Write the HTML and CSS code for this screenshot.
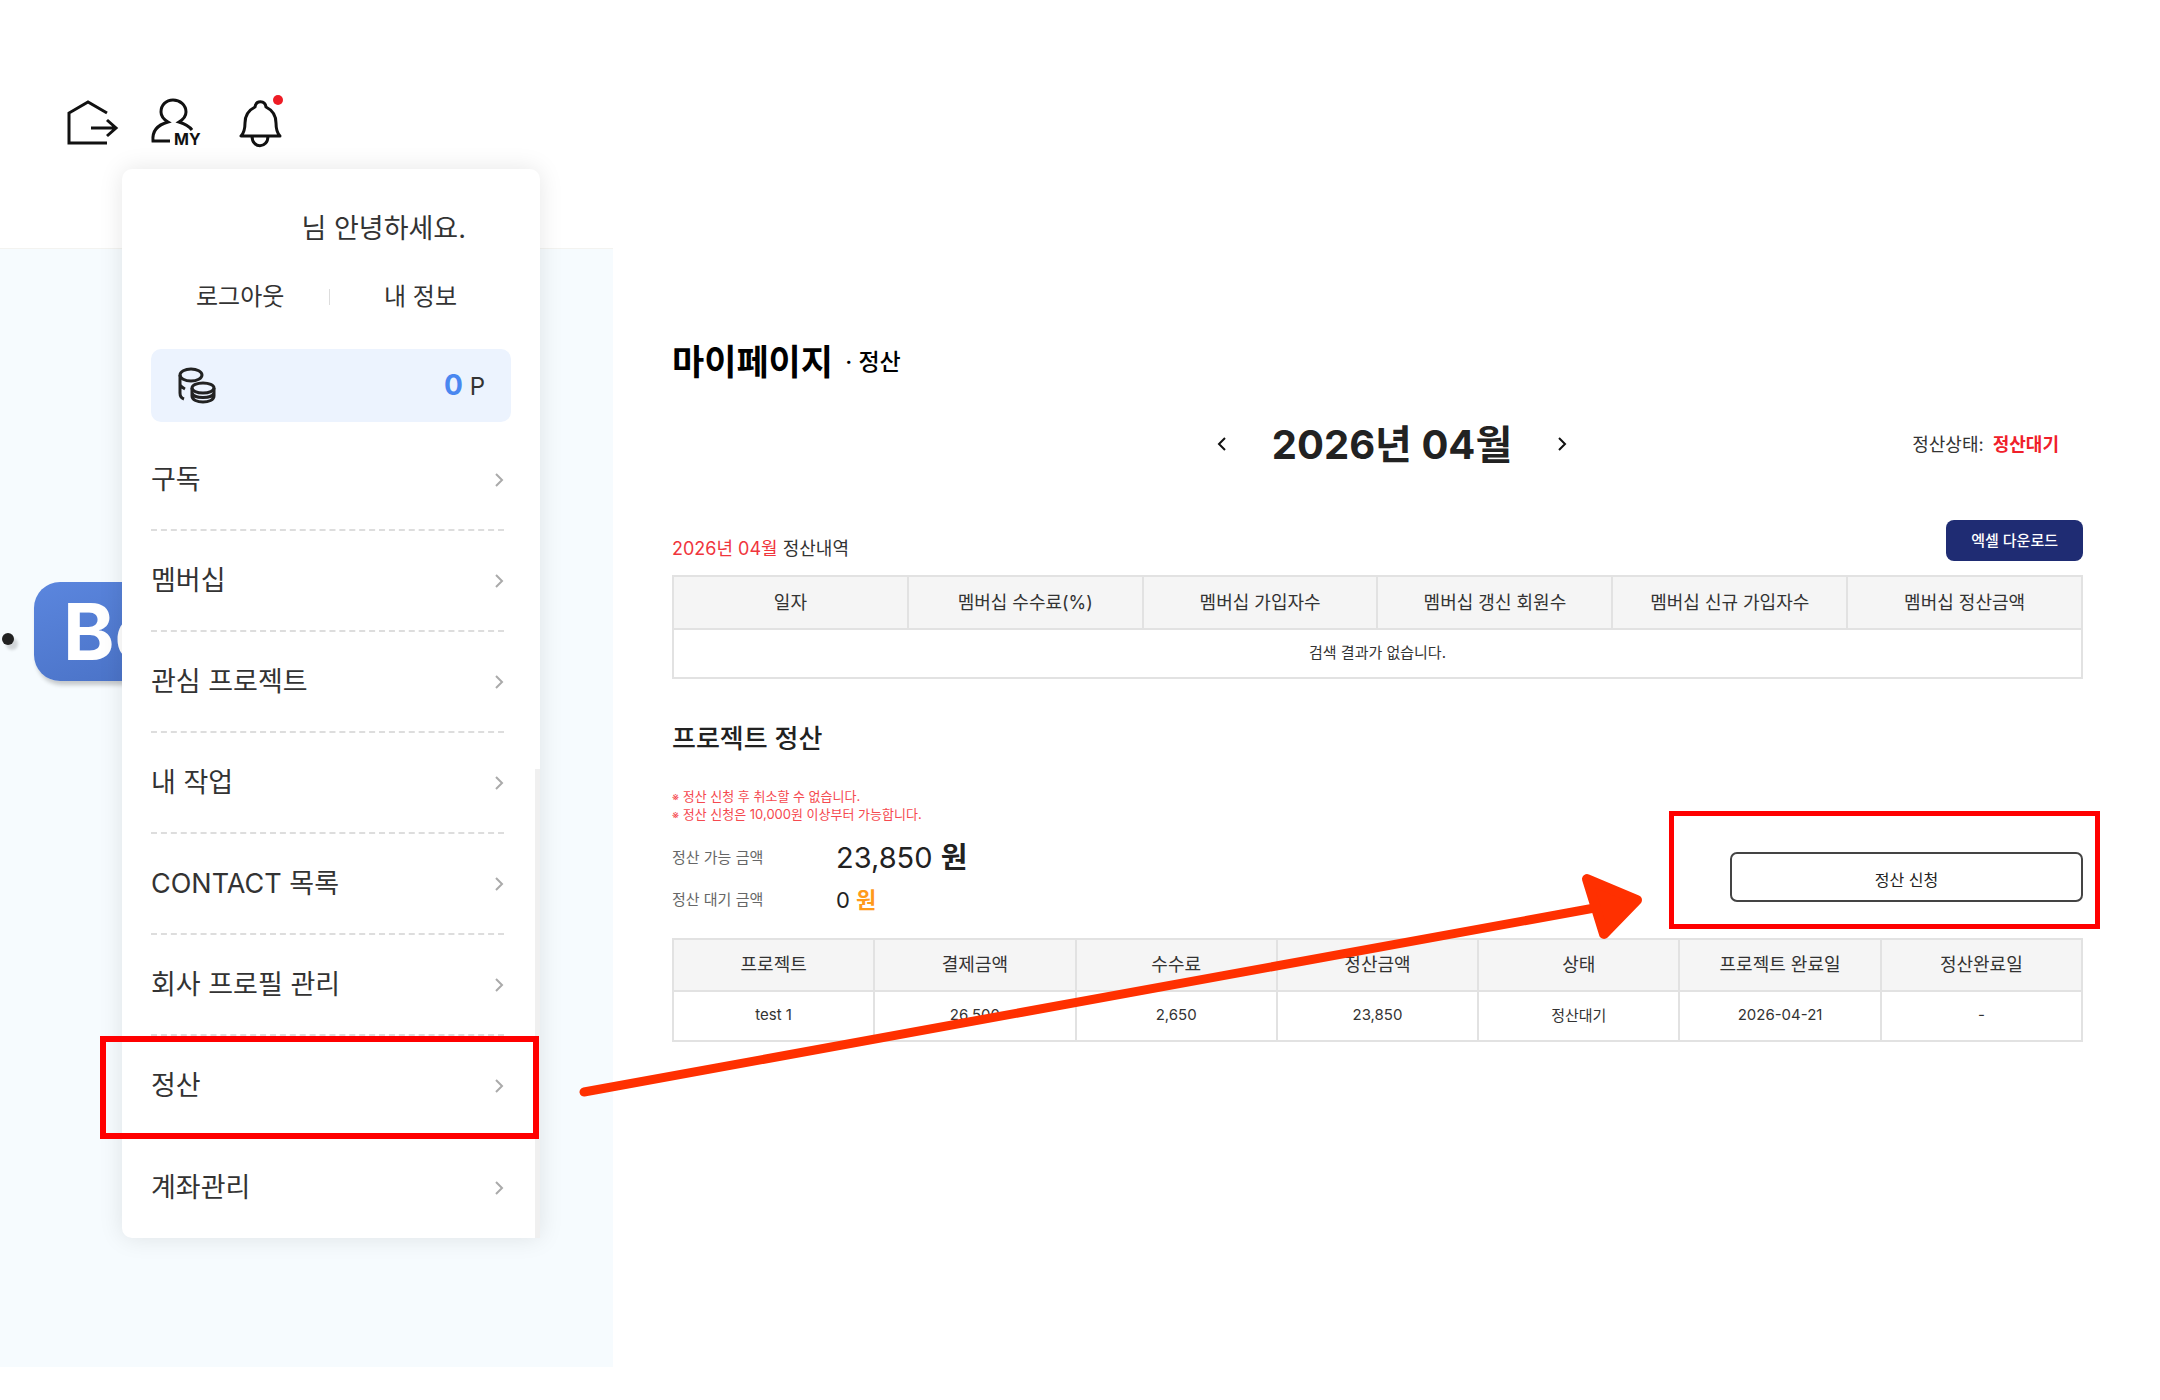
FILE: index.html
```html
<!DOCTYPE html>
<html lang="ko">
<head>
    <meta charset="UTF-8">
    <title>마이페이지 - 정산</title>
    <link rel="stylesheet" href="styles.css">
</head>
<body>
    <div class="page">
        <aside class="side">
            <header class="top-icons">
                <a href="#" aria-label="나가기">
                    <svg width="52" height="52" viewBox="0 0 52 52" fill="none" stroke="#111" stroke-width="3">
                        <path d="M42 15 L23 4 L4 15 V45 H42"/>
                        <path d="M26 30 H51 M42 22 L51 30 L42 38"/>
                    </svg>
                </a>
                <a href="#" aria-label="마이페이지">
                    <svg width="52" height="52" viewBox="0 0 52 52">
                        <path fill="none" stroke="#111" stroke-width="3" d="M19 43 H2 C1 33 6 27 17 24 C12 21 10 18 10 14 C10 7 15 2 22 2 C29 2 35 7 35 14 C35 18 33 21 28 24 C34 26 38 28 41 32"/>
                        <text class="my" x="23" y="47">MY</text>
                    </svg>
                </a>
                <a href="#" aria-label="알림">
                    <svg width="52" height="52" viewBox="0 0 52 52">
                        <path fill="none" stroke="#111" stroke-width="3" stroke-linejoin="round" d="M4 38 H43 C40 35 39 31 39 25 C39 17 35 12 29 9 C28 2 19 2 18 9 C12 12 8 17 8 25 C8 31 7 35 4 38 Z M15 38 C15 51 31 51 31 38"/>
                        <circle cx="41" cy="2" r="5" fill="#ee1c25"/>
                    </svg>
                </a>
            </header>
            <div class="hero">
                <span class="dot"></span>
                <div class="badge">Be</div>
            </div>
            <nav class="popover">
                <p class="hello">님 안녕하세요.</p>
                <div class="links">
                    <a href="#">로그아웃</a>
                    <span class="bar"></span>
                    <a href="#">내 정보</a>
                </div>
                <div class="point">
                    <svg width="40" height="38" viewBox="0 0 40 38" fill="none" stroke="#222" stroke-width="3">
                        <ellipse cx="14" cy="8" rx="11" ry="6"/>
                        <path d="M3 8 V26 C3 29 4 31 7 32 M3 18 C4 20 6 21 8 22"/>
                        <ellipse cx="26" cy="21" rx="11" ry="5"/>
                        <path d="M15 21 V29 C15 37 37 37 37 29 V21 M15 26 C17 32 35 32 37 26"/>
                    </svg>
                    <span class="point-value"><b>0</b> P</span>
                </div>
                <ul class="menu">
                    <li><a href="#">구독<svg class="arrow" viewBox="0 0 10 16"><path d="M2 2 L8 8 L2 14"/></svg></a></li>
                    <li><a href="#">멤버십<svg class="arrow" viewBox="0 0 10 16"><path d="M2 2 L8 8 L2 14"/></svg></a></li>
                    <li><a href="#">관심 프로젝트<svg class="arrow" viewBox="0 0 10 16"><path d="M2 2 L8 8 L2 14"/></svg></a></li>
                    <li><a href="#">내 작업<svg class="arrow" viewBox="0 0 10 16"><path d="M2 2 L8 8 L2 14"/></svg></a></li>
                    <li><a href="#">CONTACT 목록<svg class="arrow" viewBox="0 0 10 16"><path d="M2 2 L8 8 L2 14"/></svg></a></li>
                    <li><a href="#">회사 프로필 관리<svg class="arrow" viewBox="0 0 10 16"><path d="M2 2 L8 8 L2 14"/></svg></a></li>
                    <li class="marked"><a href="#">정산<svg class="arrow" viewBox="0 0 10 16"><path d="M2 2 L8 8 L2 14"/></svg></a></li>
                    <li><a href="#">계좌관리<svg class="arrow" viewBox="0 0 10 16"><path d="M2 2 L8 8 L2 14"/></svg></a></li>
                </ul>
                <span class="scroll-thumb"></span>
            </nav>
        </aside>

        <main class="content">
            <h1>마이페이지 <small>· 정산</small></h1>

            <div class="month-row">
                <div class="month">
                    <button type="button" aria-label="이전 달"><svg class="arrow" viewBox="0 0 10 16"><path d="M8 2 L2 8 L8 14"/></svg></button>
                    <strong>2026년 04월</strong>
                    <button type="button" aria-label="다음 달"><svg class="arrow" viewBox="0 0 10 16"><path d="M2 2 L8 8 L2 14"/></svg></button>
                </div>
                <p class="status">정산상태: <b>정산대기</b></p>
            </div>

            <div class="list-head">
                <p><em>2026년 04월</em> 정산내역</p>
                <button type="button" class="excel">엑셀 다운로드</button>
            </div>
            <table class="membership">
                <thead>
                    <tr>
                        <th>일자</th>
                        <th>멤버십 수수료(%)</th>
                        <th>멤버십 가입자수</th>
                        <th>멤버십 갱신 회원수</th>
                        <th>멤버십 신규 가입자수</th>
                        <th>멤버십 정산금액</th>
                    </tr>
                </thead>
                <tbody>
                    <tr><td colspan="6">검색 결과가 없습니다.</td></tr>
                </tbody>
            </table>

            <h2>프로젝트 정산</h2>
            <p class="notice"><span>※</span> 정산 신청 후 취소할 수 없습니다.<br><span>※</span> 정산 신청은 10,000원 이상부터 가능합니다.</p>
            <div class="request">
                <dl class="amounts">
                    <dt>정산 가능 금액</dt>
                    <dd class="available">23,850 <b>원</b></dd>
                    <dt>정산 대기 금액</dt>
                    <dd class="waiting">0 <b>원</b></dd>
                </dl>
                <div class="apply-wrap">
                    <button type="button" class="apply">정산 신청</button>
                </div>
            </div>
            <table class="project">
                <thead>
                    <tr>
                        <th>프로젝트</th>
                        <th>결제금액</th>
                        <th>수수료</th>
                        <th>정산금액</th>
                        <th>상태</th>
                        <th>프로젝트 완료일</th>
                        <th>정산완료일</th>
                    </tr>
                </thead>
                <tbody>
                    <tr>
                        <td>test 1</td>
                        <td>26,500</td>
                        <td>2,650</td>
                        <td>23,850</td>
                        <td>정산대기</td>
                        <td>2026-04-21</td>
                        <td>-</td>
                    </tr>
                </tbody>
            </table>
        </main>

        <svg class="guide-arrow" viewBox="0 0 2160 1400" fill="#ff3000" stroke="#ff3000" stroke-linejoin="round" stroke-linecap="round">
            <path stroke-width="9" d="M584 1092 L1600 907"/>
            <path stroke-width="10" d="M1587 879 L1637 900 L1604 934 Z"/>
        </svg>
    </div>
</body>
</html>
```

FILE: styles.css
```css
*, *::after {
    box-sizing: border-box;
}
body {
    margin: 0;
    background-color: #fff;
    color: #333;
    font-family: Inter, "Noto Sans CJK KR", sans-serif;
}
a {
    color: inherit;
    text-decoration: none;
}
button {
    font-family: inherit;
    cursor: pointer;
}
h1, h2, p, ul, dl, dd {
    margin: 0;
    padding: 0;
}
.page {
    position: relative;
    display: grid;
    grid-template-columns: 613px 1fr;
}

/* left side */
.side {
    position: relative;
    padding-bottom: 33px;
}
.top-icons {
    display: flex;
    gap: 34px;
    height: 248px;
    padding: 98px 65px 0;
}
.top-icons svg {
    display: block;
    overflow: visible;
}
.my {
    font-size: 16px;
    font-weight: 700;
    fill: #111;
}
.hero {
    display: flex;
    align-items: center;
    gap: 20px;
    height: 1119px;
    padding: 0 0 354px 2px;
    background-color: #f6fbfe;
    border-top: 1px solid #f3f3f0;
}
.dot {
    width: 12px;
    height: 12px;
    margin-top: 16px;
    border-radius: 50%;
    background-color: #222;
    box-shadow: 4px 5px 3px rgba(0, 0, 0, 0.15);
}
.badge {
    padding: 0 29px;
    border-radius: 26px;
    background-image: linear-gradient(160deg, #5b86de, #4870c4);
    box-shadow: 2px 4px 4px rgba(0, 0, 0, 0.2);
    color: #fff;
    font-size: 78px;
    font-weight: 700;
    line-height: 99px;
}
.popover {
    position: absolute;
    top: 169px;
    left: 122px;
    width: 418px;
    padding: 40px 29px 0;
    border-radius: 10px 10px 0 10px;
    background-color: #fff;
    box-shadow: 0 0 24px rgba(0, 0, 0, 0.1);
    font-size: 27px;
    line-height: 40px;
}
.hello {
    padding-right: 45px;
    text-align: right;
}
.links {
    display: flex;
    align-items: center;
    justify-content: space-between;
    margin: 28px 54px 32px 45px;
    font-size: 24px;
}
.bar {
    width: 1px;
    height: 16px;
    margin-right: 10px;
    background-color: #ddd;
}
.point {
    display: flex;
    align-items: center;
    justify-content: space-between;
    height: 73px;
    padding: 0 26px;
    border-radius: 10px;
    background-color: #ecf3fe;
}
.point-value {
    font-size: 24px;
}
.point-value b {
    color: #4a87f0;
    font-size: 28px;
    font-weight: 700;
}
.menu {
    padding: 8px 7px 0 0;
    list-style: none;
}
.menu li {
    position: relative;
    height: 101px;
    border-bottom: 2px dashed #ddd;
}
.menu li:last-child {
    border-bottom: none;
}
.menu a {
    display: flex;
    align-items: center;
    justify-content: space-between;
    height: 100%;
}
.arrow {
    width: 10px;
    height: 16px;
    fill: none;
    stroke: #aaa;
    stroke-width: 2;
}
.marked::after {
    content: "";
    position: absolute;
    top: 0;
    left: -51px;
    right: -35px;
    height: 103px;
    border: 6px solid #f00;
    z-index: 1;
}
.scroll-thumb {
    position: absolute;
    right: 0;
    bottom: 0;
    width: 5px;
    height: 469px;
    background-color: #f0f0f0;
}

/* settlement page */
.content {
    padding: 336px 77px 0 59px;
}
h1 {
    color: #000;
    font-size: 35px;
    font-weight: 700;
    line-height: 52px;
}
h1 small {
    margin-left: 4px;
    font-size: 23px;
    font-weight: 500;
    line-height: 24px;
    vertical-align: 5px;
}
.month-row {
    display: grid;
    grid-template-columns: 1fr auto 1fr;
    align-items: center;
    margin-top: 31px;
    padding: 0 24px 0 53px;
}
.month {
    grid-column: 2;
    display: flex;
    align-items: center;
    gap: 45px;
}
.month strong {
    color: #222;
    font-size: 40px;
    line-height: 52px;
}
.month button {
    display: flex;
    padding: 0 0 2px;
    border: none;
    background: none;
}
.month .arrow {
    stroke: #111;
}
.status {
    padding-bottom: 4px;
    font-size: 18px;
    text-align: right;
}
.status b {
    margin-left: 4px;
    color: #f0202a;
}
.list-head {
    display: flex;
    align-items: flex-end;
    justify-content: space-between;
    margin-top: 49px;
    padding-bottom: 14px;
    font-size: 18px;
    line-height: 24px;
}
.list-head em {
    color: #f0353c;
    font-style: normal;
}
.excel {
    height: 41px;
    padding: 0 25px 3px;
    border: none;
    border-radius: 8px;
    background-color: #1f2c73;
    color: #fff;
    font-size: 15px;
    font-weight: 500;
}
table {
    width: 100%;
    border-collapse: collapse;
    table-layout: fixed;
    text-align: center;
}
th, td {
    padding: 0 0 4px;
    border: 2px solid #e2e2e2;
}
th {
    height: 53px;
    background-color: #f5f5f5;
    font-size: 18px;
    font-weight: 400;
}
td {
    height: 49px;
    font-size: 15px;
}
.project th {
    height: 52px;
}
.project td {
    height: 50px;
}
h2 {
    margin-top: 40px;
    color: #222;
    font-size: 26px;
    font-weight: 500;
    line-height: 40px;
}
.notice {
    margin-top: 29px;
    color: #f5494f;
    font-size: 13px;
    line-height: 17px;
}
.notice span {
    font-size: 11px;
}
.request {
    display: flex;
    align-items: center;
    justify-content: space-between;
    margin: 13px 0 17px;
}
.amounts {
    display: grid;
    grid-template-columns: 164px auto;
    align-items: center;
}
.amounts dt {
    padding-bottom: 4px;
    color: #666;
    font-size: 15px;
}
.amounts dd {
    color: #222;
    line-height: 42px;
}
.available {
    font-size: 29px;
}
.waiting {
    font-size: 22px;
}
.waiting b {
    color: #ff9a1a;
}
.apply-wrap {
    position: relative;
    margin-bottom: 4px;
}
.apply {
    width: 353px;
    height: 50px;
    padding: 4px 0 0;
    border: 2px solid #444;
    border-radius: 7px;
    background-color: #fff;
    color: #222;
    font-size: 16px;
}
.apply-wrap::after {
    content: "";
    position: absolute;
    top: -41px;
    right: -17px;
    bottom: -27px;
    left: -61px;
    border: 5px solid #f00;
    pointer-events: none;
}
.guide-arrow {
    position: absolute;
    top: 0;
    left: 0;
    width: 100%;
    pointer-events: none;
}
```
